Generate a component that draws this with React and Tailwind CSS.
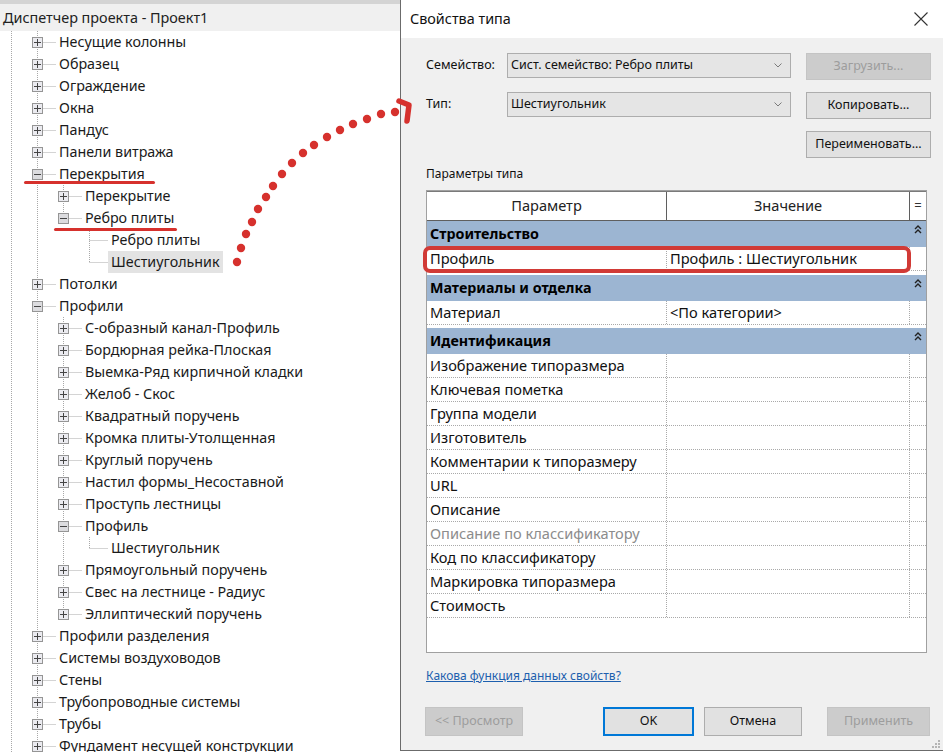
import React from "react";

const TREE = [
  { t: "Несущие колонны", box: "+" },
  { t: "Образец", box: "+" },
  { t: "Ограждение", box: "+" },
  { t: "Окна", box: "+" },
  { t: "Пандус", box: "+" },
  { t: "Панели витража", box: "+" },
  {
    t: "Перекрытия",
    box: "-",
    kids: [
      { t: "Перекрытие", box: "+" },
      {
        t: "Ребро плиты",
        box: "-",
        kids: [{ t: "Ребро плиты" }, { t: "Шестиугольник", selected: true }],
      },
    ],
  },
  { t: "Потолки", box: "+" },
  {
    t: "Профили",
    box: "-",
    kids: [
      { t: "С-образный канал-Профиль", box: "+" },
      { t: "Бордюрная рейка-Плоская", box: "+" },
      { t: "Выемка-Ряд кирпичной кладки", box: "+" },
      { t: "Желоб - Скос", box: "+" },
      { t: "Квадратный поручень", box: "+" },
      { t: "Кромка плиты-Утолщенная", box: "+" },
      { t: "Круглый поручень", box: "+" },
      { t: "Настил формы_Несоставной", box: "+" },
      { t: "Проступь лестницы", box: "+" },
      { t: "Профиль", box: "-", kids: [{ t: "Шестиугольник" }] },
      { t: "Прямоугольный поручень", box: "+" },
      { t: "Свес на лестнице - Радиус", box: "+" },
      { t: "Эллиптический поручень", box: "+" },
    ],
  },
  { t: "Профили разделения", box: "+" },
  { t: "Системы воздуховодов", box: "+" },
  { t: "Стены", box: "+" },
  { t: "Трубопроводные системы", box: "+" },
  { t: "Трубы", box: "+" },
  { t: "Фундамент несущей конструкции", box: "+" },
];

function flatten(nodes, level, cont, out, top) {
  nodes.forEach((n, i) => {
    const last = top ? false : i === nodes.length - 1;
    out.push({ ...n, level, cont, last });
    if (n.kids) flatten(n.kids, level + 1, [...cont, !last], out, false);
  });
  return out;
}

const ROWS = flatten(TREE, 1, [], [], true);

// dotted tree guides + expander box
function Guides({ level, cont, last, box }) {
  const col = (c) => 11 + 26 * c + 0.5;
  const w = 11 + 26 * level + 19;
  const x = col(level);
  return (
    <svg width={w} height="22" className="shrink-0">
      <g stroke="#a8a8a8" strokeWidth="1" strokeDasharray="1 1">
        <line x1={col(0)} y1="0" x2={col(0)} y2="22" />
        {cont.map((c, i) =>
          c ? <line key={i} x1={col(i + 1)} y1="0" x2={col(i + 1)} y2="22" /> : null
        )}
        <line x1={x} y1="0" x2={x} y2={last ? 11.5 : 22} />
        <line x1={x} y1="11.5" x2={w} y2="11.5" />
      </g>
      {box && (
        <g>
          <rect
            x={x - 5}
            y="6.5"
            width="10"
            height="10"
            fill={box === "-" ? "#dcdcdf" : "#ebebf0"}
            stroke="#959595"
          />
          <line x1={x - 3.5} y1="11.5" x2={x + 3.5} y2="11.5" stroke="#444" />
          {box === "+" && <line x1={x} y1="8" x2={x} y2="15" stroke="#444" />}
        </g>
      )}
    </svg>
  );
}

function ProjectBrowser() {
  return (
    <div className="w-[400px] shrink-0 bg-white">
      <div className="h-[4px] bg-[#d4d4d4]" />
      <div className="h-[27px] bg-[#f0f0f0] flex items-center pl-[3px] text-[14.4px] text-[#222]">
        Диспетчер проекта - Проект1
      </div>
      <div>
        {ROWS.map((r, i) => (
          <div key={i} className="h-[22px] flex items-center">
            <Guides level={r.level} cont={r.cont} last={r.last} box={r.box} />
            <span
              className={
                "h-[22px] flex items-center px-[3px] text-[14.3px] text-[#1a1a1a] whitespace-nowrap " +
                (r.selected ? "bg-[#e3e3e3]" : "")
              }
            >
              {r.t}
            </span>
          </div>
        ))}
      </div>
    </div>
  );
}

function Chevron() {
  return (
    <svg width="8" height="5" viewBox="0 0 8 5">
      <path d="M0.5 0.5 L4 4 L7.5 0.5" fill="none" stroke="#7a7a7a" strokeWidth="1" />
    </svg>
  );
}

function Select({ value }) {
  return (
    <div className="w-[284px] h-[25px] border border-[#adadad] bg-[#e5e5e5] flex items-center justify-between pl-[3px] pr-[8px] text-[12.5px] text-[#111]">
      <span>{value}</span>
      <Chevron />
    </div>
  );
}

function Btn({ children, disabled, primary, className = "" }) {
  let cls = "bg-[#e1e1e1] border border-[#adadad] text-[#111]";
  if (disabled) cls = "bg-[#cccccc] border border-[#c4c4c4] text-[#9d9d9d]";
  if (primary) cls = "bg-[#e1e1e1] border-2 border-[#0078d7] text-[#111]";
  return (
    <div className={"flex items-center justify-center text-[12.5px] " + cls + " " + className}>
      {children}
    </div>
  );
}

function Collapse() {
  return (
    <svg width="8" height="9" viewBox="0 0 8 9">
      <path d="M1 4 L4 1 L7 4 M1 8 L4 5 L7 8" fill="none" stroke="#222" strokeWidth="1.4" />
    </svg>
  );
}

function GroupRow({ title }) {
  return (
    <div className="h-[26px] bg-[#9cb5d2] flex">
      <div className="flex-1 flex items-center pl-[3px] text-[14.3px] font-bold text-black">{title}</div>
      <div className="w-[16px] flex justify-center pt-[4px]">
        <Collapse />
      </div>
    </div>
  );
}

function Row({ name, value, muted }) {
  return (
    <div className="h-[24px] flex border-b border-dotted border-[#a9a9a9]">
      <div
        className={
          "w-[240px] flex items-center pl-[3px] text-[14.6px] border-r border-dotted border-[#a9a9a9] whitespace-nowrap " +
          (muted ? "text-[#8c8c8c]" : "text-[#111]")
        }
      >
        {name}
      </div>
      <div className="w-[243px] flex items-center pl-[3px] text-[14.6px] text-[#111] border-r border-dotted border-[#a9a9a9] whitespace-nowrap">
        {value}
      </div>
      <div className="flex-1" />
    </div>
  );
}

const IDENT = [
  "Изображение типоразмера",
  "Ключевая пометка",
  "Группа модели",
  "Изготовитель",
  "Комментарии к типоразмеру",
  "URL",
  "Описание",
  "Описание по классификатору",
  "Код по классификатору",
  "Маркировка типоразмера",
  "Стоимость",
];

function TypeDialog() {
  return (
    <div className="flex-1 h-[751px] border-l border-b border-[#6b6b6b] bg-[#f0f0f0] flex flex-col">
      <div className="h-[38px] shrink-0 bg-white flex items-center justify-between pl-[9px] pr-[15px]">
        <span className="text-[14.4px] text-[#111]">Свойства типа</span>
        <svg width="14" height="14" viewBox="0 0 14 14">
          <path d="M0.5 0.5 L13.5 13.5 M13.5 0.5 L0.5 13.5" stroke="#333" strokeWidth="1.1" />
        </svg>
      </div>

      <div className="flex flex-col pl-[25px] pt-[15px]">
        <div className="flex items-start">
          <div className="w-[81px] h-[25px] flex items-center text-[12.5px] text-[#111]">Семейство:</div>
          <Select value="Сист. семейство: Ребро плиты" />
          <Btn disabled className="ml-[15px] w-[125px] h-[27px]">
            Загрузить...
          </Btn>
        </div>
        <div className="flex items-start mt-[12px]">
          <div className="w-[81px] h-[25px] flex items-center text-[12.5px] text-[#111]">Тип:</div>
          <Select value="Шестиугольник" />
          <Btn className="ml-[15px] w-[125px] h-[27px]">Копировать...</Btn>
        </div>
        <div className="flex mt-[12px] pl-[380px]">
          <Btn className="w-[125px] h-[27px]">Переименовать...</Btn>
        </div>

        <div className="mt-[8px] text-[12px] leading-[16px] text-[#111]">Параметры типа</div>

        <div className="mt-[8px] w-[501px] h-[463px] border border-[#a0a0a0] bg-white flex flex-col">
          <div className="h-[30px] shrink-0 flex border-b border-[#5f5f5f] border-t border-t-[#7a7a7a]">
            <div className="w-[240px] flex items-center justify-center text-[14.6px] text-[#222] border-r border-[#5f5f5f]">
              Параметр
            </div>
            <div className="w-[243px] flex items-center justify-center text-[14.6px] text-[#222] border-r border-[#5f5f5f]">
              Значение
            </div>
            <div className="flex-1 flex items-center justify-center text-[13px] text-[#333]">=</div>
          </div>

          <GroupRow title="Строительство" />
          <Row name="Профиль" value="Профиль : Шестиугольник" />
          <div className="h-[4px] shrink-0" />
          <GroupRow title="Материалы и отделка" />
          <Row name="Материал" value="<По категории>" />
          <div className="h-[3px] shrink-0" />
          <GroupRow title="Идентификация" />
          {IDENT.map((n) => (
            <Row key={n} name={n} value="" muted={n === "Описание по классификатору"} />
          ))}
        </div>

        <div className="mt-[15px] text-[12px] leading-[16px] text-[#1d5fae] underline">
          Какова функция данных свойств?
        </div>

        <div className="mt-[23px] flex items-center">
          <Btn disabled className="w-[98px] h-[29px] -ml-[1px]">
            {"<< Просмотр"}
          </Btn>
          <Btn primary className="ml-[80px] w-[91px] h-[29px]">
            OK
          </Btn>
          <Btn className="ml-[10px] w-[98px] h-[29px]">Отмена</Btn>
          <Btn disabled className="ml-[25px] w-[103px] h-[29px]">
            Применить
          </Btn>
        </div>
        <div className="flex justify-end pr-[3px] mt-[4px]">
          <svg width="8" height="8" viewBox="0 0 8 8" fill="#b5b5b5">
            <rect x="6" y="0" width="2" height="2" />
            <rect x="3" y="3" width="2" height="2" />
            <rect x="6" y="3" width="2" height="2" />
            <rect x="0" y="6" width="2" height="2" />
            <rect x="3" y="6" width="2" height="2" />
            <rect x="6" y="6" width="2" height="2" />
          </svg>
        </div>
      </div>
    </div>
  );
}

const DOTS = [
  [237, 262], [241, 248], [246, 234], [252, 222], [258, 209], [266, 197], [273, 186],
  [282, 174], [292, 163], [303, 153], [314, 145], [327, 137], [340, 130], [353, 124],
  [367, 119], [381, 114], [395, 112],
];

function Annotations() {
  return (
    <>
      <div className="absolute left-[24px] top-[181px] w-[131px] h-[3px] rounded-full bg-[#d6312d]" />
      <div className="absolute left-[54px] top-[228px] w-[123px] h-[3px] rounded-full bg-[#d6312d]" />
      <div className="absolute left-[423px] top-[246px] w-[488px] h-[27px] rounded-[7px] border-[4px] border-[#d13a36]" />
      <svg className="absolute left-0 top-0 pointer-events-none" width="943" height="752">
        {DOTS.map(([x, y], i) => (
          <circle key={i} cx={x} cy={y} r="4.2" fill="#d6312d" />
        ))}
        <path
          d="M399 101 L409 105 L407 121"
          fill="none"
          stroke="#d6312d"
          strokeWidth="5.5"
          strokeLinecap="round"
          strokeLinejoin="round"
        />
      </svg>
    </>
  );
}

export default function App() {
  return (
    <div className="relative w-[943px] h-[752px] overflow-hidden bg-white flex items-start font-['Noto_Sans',sans-serif]">
      <ProjectBrowser />
      <TypeDialog />
      <Annotations />
    </div>
  );
}
